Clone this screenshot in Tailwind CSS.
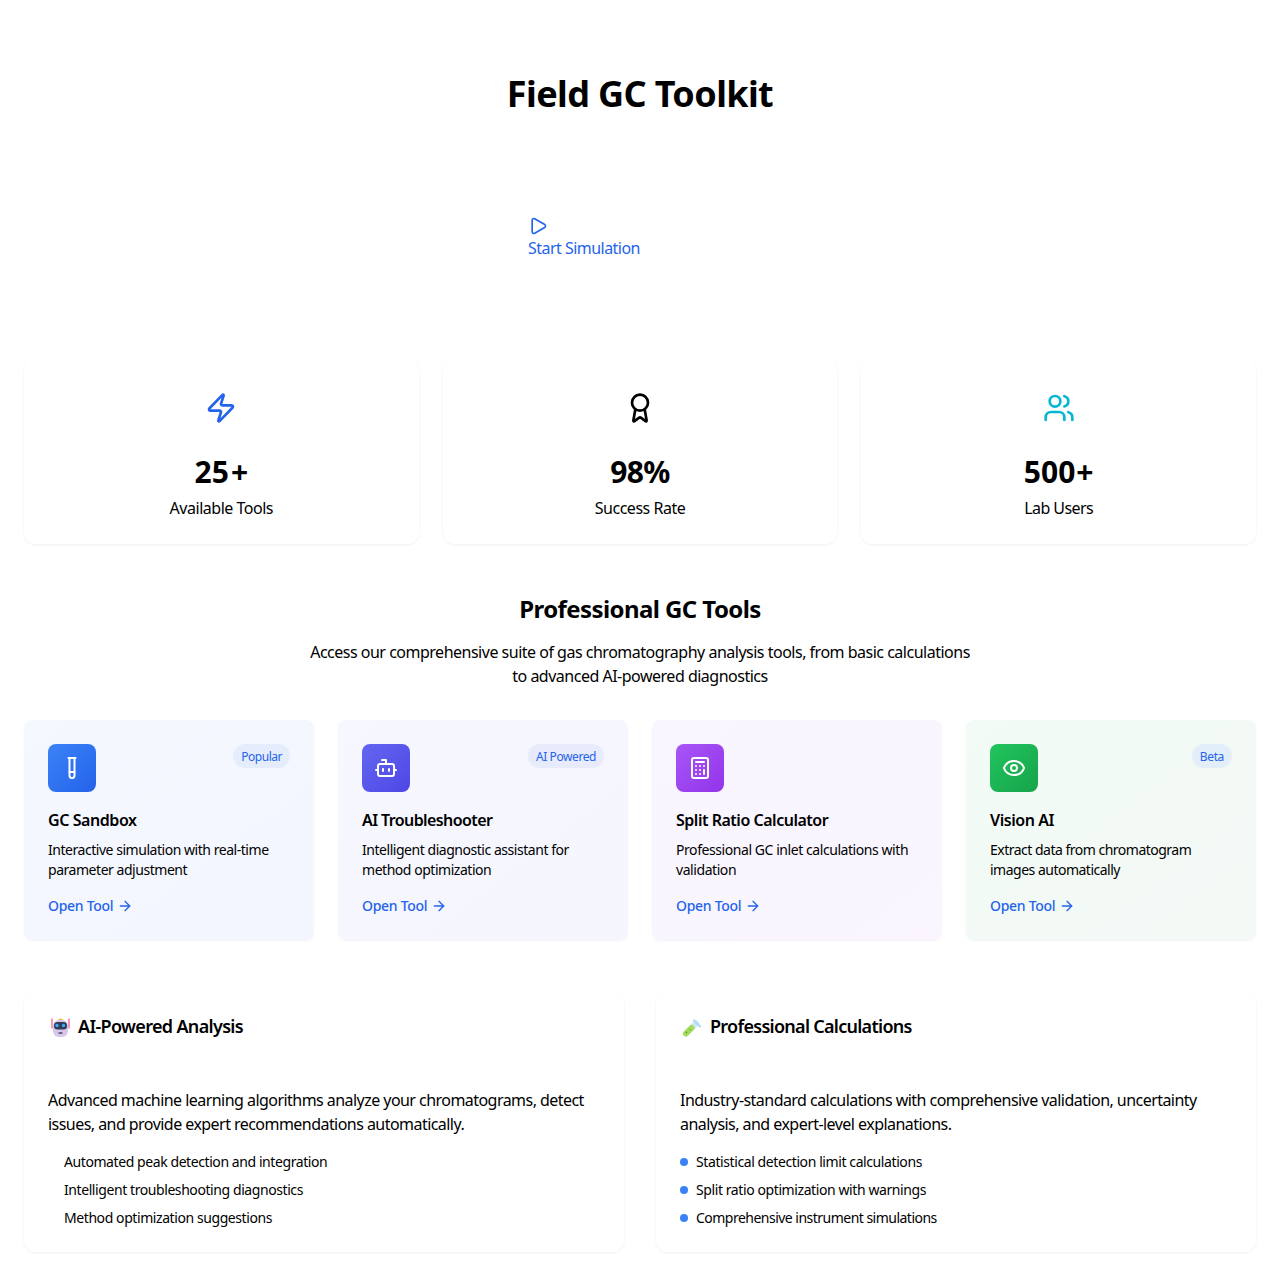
<!DOCTYPE html>
<html lang="en">
  <head>
    <meta charset="UTF-8" />
    <title>Field GC Toolkit</title>
    <script src="https://cdn.jsdelivr.net/npm/@tailwindcss/browser@4"></script>
  </head>
  <body class="bg-white text-black font-['Noto_Sans',sans-serif]">
    <main class="h-[1276px] overflow-hidden px-6">
      <!-- Hero -->
      <section class="h-[358px] pt-[70px]">
        <h1 class="text-center text-4xl leading-[48px] font-bold tracking-[-0.017em]">Field GC Toolkit</h1>
        <div class="w-[224px] mx-auto mt-[98px]">
          <svg class="w-5 h-5 text-[#2563eb]" viewBox="0 0 24 24" fill="none" stroke="currentColor" stroke-width="2" stroke-linecap="round" stroke-linejoin="round"><path d="M5 5a2 2 0 0 1 3.008-1.728l11.997 6.998a2 2 0 0 1 .003 3.458l-12 7A2 2 0 0 1 5 19z" /></svg>
          <span class="block text-base leading-6 text-[#2563eb] tracking-[-0.033em]">Start Simulation</span>
        </div>
      </section>

      <!-- Stats -->
      <section class="grid grid-cols-3 gap-6 h-[186px]">
        <div class="rounded-xl bg-white shadow-[0_1px_3px_rgba(0,0,0,0.06)] pt-[34px] text-center">
          <svg class="w-8 h-8 mx-auto text-[#2563eb]" viewBox="0 0 24 24" fill="none" stroke="currentColor" stroke-width="2" stroke-linecap="round" stroke-linejoin="round"><path d="M4 14a1 1 0 0 1-.78-1.63l9.9-10.2a.5.5 0 0 1 .86.46l-1.92 6.02A1 1 0 0 0 13 10h7a1 1 0 0 1 .78 1.63l-9.9 10.2a.5.5 0 0 1-.86-.46l1.92-6.02A1 1 0 0 0 11 14z" /></svg>
          <p class="mt-[30px] text-3xl leading-9 font-bold">25<span class="ml-0.5">+</span></p>
          <p class="mt-1.5 text-base leading-6 tracking-[-0.03em]">Available Tools</p>
        </div>
        <div class="rounded-xl bg-white shadow-[0_1px_3px_rgba(0,0,0,0.06)] pt-[34px] text-center">
          <svg class="w-8 h-8 mx-auto text-black" viewBox="0 0 24 24" fill="none" stroke="currentColor" stroke-width="2" stroke-linecap="round" stroke-linejoin="round"><path d="m15.477 12.89 1.515 8.526a.5.5 0 0 1-.81.47l-3.58-2.687a1 1 0 0 0-1.197 0l-3.586 2.686a.5.5 0 0 1-.81-.469l1.514-8.526" /><circle cx="12" cy="8" r="6" /></svg>
          <p class="mt-[30px] text-3xl leading-9 font-bold tracking-[-0.02em]">98%</p>
          <p class="mt-1.5 text-base leading-6 tracking-[-0.03em]">Success Rate</p>
        </div>
        <div class="rounded-xl bg-white shadow-[0_1px_3px_rgba(0,0,0,0.06)] pt-[34px] text-center">
          <svg class="w-8 h-8 mx-auto text-[#06b6d4]" viewBox="0 0 24 24" fill="none" stroke="currentColor" stroke-width="2" stroke-linecap="round" stroke-linejoin="round"><path d="M16 21v-2a4 4 0 0 0-4-4H6a4 4 0 0 0-4 4v2" /><circle cx="9" cy="7" r="4" /><path d="M22 21v-2a4 4 0 0 0-3-3.87" /><path d="M16 3.13a4 4 0 0 1 0 7.75" /></svg>
          <p class="mt-[30px] text-3xl leading-9 font-bold">500<span class="ml-px">+</span></p>
          <p class="mt-1.5 text-base leading-6 tracking-[-0.035em]">Lab Users</p>
        </div>
      </section>

      <!-- Tools heading -->
      <section class="mt-[47px] text-center">
        <h2 class="text-2xl leading-9 font-bold tracking-[-0.024em]">Professional GC Tools</h2>
        <p class="mt-[13px] mx-auto max-w-2xl text-base leading-6 tracking-[-0.031em]">Access our comprehensive suite of gas chromatography analysis tools, from basic calculations to advanced AI-powered diagnostics</p>
      </section>

      <!-- Tool cards -->
      <section class="mt-[32px] grid grid-cols-4 gap-6">
        <article class="h-[220px] rounded-lg p-6 bg-gradient-to-br from-[#f5f8ff] to-[#f3f6fe] shadow-[0_1px_2px_rgba(0,0,0,0.05)]">
          <div class="flex items-start justify-between">
            <div class="w-12 h-12 rounded-lg flex items-center justify-center bg-gradient-to-br from-[#3b82f6] to-[#2563eb]">
              <svg class="w-6 h-6 text-white" viewBox="0 0 24 24" fill="none" stroke="currentColor" stroke-width="2" stroke-linecap="round" stroke-linejoin="round"><path d="M14.5 2v17.5c0 1.4-1.1 2.5-2.5 2.5c-1.4 0-2.5-1.1-2.5-2.5V2" /><path d="M8.5 2h7" /><path d="M14.5 16h-5" /></svg>
            </div>
            <span class="h-6 px-2 rounded-full bg-[#e5edfd] text-xs leading-[26px] text-[#2563eb] tracking-[-0.04em]">Popular</span>
          </div>
          <h3 class="mt-4 text-base leading-6 font-semibold tracking-[-0.027em]">GC Sandbox</h3>
          <p class="mt-2 text-sm leading-5 tracking-[-0.033em]">Interactive simulation with real-time parameter adjustment</p>
          <a class="mt-4 flex items-center gap-1 text-sm leading-5 font-medium text-[#2563eb] tracking-[-0.02em]">Open Tool <svg class="w-4 h-4" viewBox="0 0 24 24" fill="none" stroke="currentColor" stroke-width="2" stroke-linecap="round" stroke-linejoin="round"><path d="M5 12h14" /><path d="m12 5 7 7-7 7" /></svg></a>
        </article>
        <article class="h-[220px] rounded-lg p-6 bg-gradient-to-br from-[#f6f7ff] to-[#f5f5fe] shadow-[0_1px_2px_rgba(0,0,0,0.05)]">
          <div class="flex items-start justify-between">
            <div class="w-12 h-12 rounded-lg flex items-center justify-center bg-gradient-to-br from-[#6366f1] to-[#4f46e5]">
              <svg class="w-6 h-6 text-white" viewBox="0 0 24 24" fill="none" stroke="currentColor" stroke-width="2" stroke-linecap="round" stroke-linejoin="round"><path d="M12 8V4H8" /><rect width="16" height="12" x="4" y="8" rx="2" /><path d="M2 14h2" /><path d="M20 14h2" /><path d="M15 13v2" /><path d="M9 13v2" /></svg>
            </div>
            <span class="h-6 px-2 rounded-full bg-[#e7ebfc] text-xs leading-[26px] text-[#2563eb] tracking-[-0.035em]">AI Powered</span>
          </div>
          <h3 class="mt-4 text-base leading-6 font-semibold tracking-[-0.037em]">AI Troubleshooter</h3>
          <p class="mt-2 text-sm leading-5 tracking-[-0.033em]">Intelligent diagnostic assistant for method optimization</p>
          <a class="mt-4 flex items-center gap-1 text-sm leading-5 font-medium text-[#2563eb] tracking-[-0.02em]">Open Tool <svg class="w-4 h-4" viewBox="0 0 24 24" fill="none" stroke="currentColor" stroke-width="2" stroke-linecap="round" stroke-linejoin="round"><path d="M5 12h14" /><path d="m12 5 7 7-7 7" /></svg></a>
        </article>
        <article class="h-[220px] rounded-lg p-6 bg-gradient-to-br from-[#f9f6ff] to-[#faf5fe] shadow-[0_1px_2px_rgba(0,0,0,0.05)]">
          <div class="flex items-start justify-between">
            <div class="w-12 h-12 rounded-lg flex items-center justify-center bg-gradient-to-br from-[#a855f7] to-[#9333ea]">
              <svg class="w-6 h-6 text-white" viewBox="0 0 24 24" fill="none" stroke="currentColor" stroke-width="2" stroke-linecap="round" stroke-linejoin="round"><rect width="16" height="20" x="4" y="2" rx="2" /><line x1="8" x2="16" y1="6" y2="6" /><line x1="16" x2="16" y1="14" y2="18" /><path d="M16 10h.01" /><path d="M12 10h.01" /><path d="M8 10h.01" /><path d="M12 14h.01" /><path d="M8 14h.01" /><path d="M12 18h.01" /><path d="M8 18h.01" /></svg>
            </div>
          </div>
          <h3 class="mt-4 text-base leading-6 font-semibold tracking-[-0.03em]">Split Ratio Calculator</h3>
          <p class="mt-2 text-sm leading-5 tracking-[-0.031em]">Professional GC inlet calculations with validation</p>
          <a class="mt-4 flex items-center gap-1 text-sm leading-5 font-medium text-[#2563eb] tracking-[-0.02em]">Open Tool <svg class="w-4 h-4" viewBox="0 0 24 24" fill="none" stroke="currentColor" stroke-width="2" stroke-linecap="round" stroke-linejoin="round"><path d="M5 12h14" /><path d="m12 5 7 7-7 7" /></svg></a>
        </article>
        <article class="h-[220px] rounded-lg p-6 bg-gradient-to-br from-[#f2fbf6] to-[#f4f9f6] shadow-[0_1px_2px_rgba(0,0,0,0.05)]">
          <div class="flex items-start justify-between">
            <div class="w-12 h-12 rounded-lg flex items-center justify-center bg-gradient-to-br from-[#22c55e] to-[#16a34a]">
              <svg class="w-6 h-6 text-white" viewBox="0 0 24 24" fill="none" stroke="currentColor" stroke-width="2" stroke-linecap="round" stroke-linejoin="round"><path d="M2.062 12.348a1 1 0 0 1 0-.696 10.75 10.75 0 0 1 19.876 0 1 1 0 0 1 0 .696 10.75 10.75 0 0 1-19.876 0" /><circle cx="12" cy="12" r="3" /></svg>
            </div>
            <span class="h-6 px-2 rounded-full bg-[#e2eefa] text-xs leading-[26px] text-[#2563eb] tracking-[-0.03em]">Beta</span>
          </div>
          <h3 class="mt-4 text-base leading-6 font-semibold tracking-[-0.027em]">Vision AI</h3>
          <p class="mt-2 text-sm leading-5 tracking-[-0.036em]">Extract data from chromatogram images automatically</p>
          <a class="mt-4 flex items-center gap-1 text-sm leading-5 font-medium text-[#2563eb] tracking-[-0.02em]">Open Tool <svg class="w-4 h-4" viewBox="0 0 24 24" fill="none" stroke="currentColor" stroke-width="2" stroke-linecap="round" stroke-linejoin="round"><path d="M5 12h14" /><path d="m12 5 7 7-7 7" /></svg></a>
        </article>
      </section>

      <!-- Feature panels -->
      <section class="mt-[52px] grid grid-cols-2 gap-8">
        <article class="h-[260px] rounded-xl bg-white shadow-[0_1px_3px_rgba(0,0,0,0.06)] px-6 pt-6">
          <h3 class="flex items-center gap-2 text-lg font-semibold tracking-[-0.037em]">
            <svg class="w-[22px] h-[22px]" viewBox="0 0 22 22"><path d="M4 2.5v10M21 2.5v10" stroke="#f06fa4" stroke-width="1.4" /><path d="M9.5 4q3-3 6 0z" fill="#f5b93a" /><rect x="5" y="4" width="15" height="17" rx="6" fill="#d6c8e8" /><rect x="6" y="6" width="13" height="7.5" rx="3.5" fill="#343a58" /><circle cx="9" cy="9.5" r="1.7" fill="#35b2ee" /><circle cx="15.5" cy="9.5" r="1.7" fill="#35b2ee" /><rect x="10.5" y="16.3" width="4" height="1.5" rx="0.5" fill="#4a4560" /></svg>
            <span class="leading-5 pb-0.5">AI-Powered Analysis</span>
          </h3>
          <p class="mt-[50px] text-base leading-6 tracking-[-0.034em]">Advanced machine learning algorithms analyze your chromatograms, detect issues, and provide expert recommendations automatically.</p>
          <ul class="mt-[16px] text-sm leading-5 space-y-2 pl-4 tracking-[-0.03em]">
            <li>Automated peak detection and integration</li>
            <li>Intelligent troubleshooting diagnostics</li>
            <li>Method optimization suggestions</li>
          </ul>
        </article>
        <article class="h-[260px] rounded-xl bg-white shadow-[0_1px_3px_rgba(0,0,0,0.06)] px-6 pt-6">
          <h3 class="flex items-center gap-2 text-lg font-semibold tracking-[-0.04em]">
            <svg class="w-[22px] h-[22px]" viewBox="0 0 22 22"><path d="M6 17.5L16 7.5" stroke="#cfe6f7" stroke-width="6" stroke-linecap="round" /><path d="M6 17.5L11.5 12" stroke="#a6dc5e" stroke-width="6" stroke-linecap="round" /><path d="M14 4.5l6 6" stroke="#b4d9f3" stroke-width="2.4" stroke-linecap="round" /><circle cx="6.5" cy="16.5" r="0.9" fill="#5aa83a" /><circle cx="10" cy="13.5" r="0.8" fill="#5aa83a" /></svg>
            <span class="leading-5 pb-0.5">Professional Calculations</span>
          </h3>
          <p class="mt-[50px] text-base leading-6 tracking-[-0.034em]">Industry-standard calculations with comprehensive validation, uncertainty analysis, and expert-level explanations.</p>
          <ul class="mt-[16px] text-sm leading-5 space-y-2 tracking-[-0.029em]">
            <li class="flex items-center gap-2"><span class="w-2 h-2 rounded-full bg-[#3b82f6]"></span>Statistical detection limit calculations</li>
            <li class="flex items-center gap-2"><span class="w-2 h-2 rounded-full bg-[#3b82f6]"></span>Split ratio optimization with warnings</li>
            <li class="flex items-center gap-2 tracking-[-0.037em]"><span class="w-2 h-2 rounded-full bg-[#3b82f6]"></span>Comprehensive instrument simulations</li>
          </ul>
        </article>
      </section>
    </main>
  </body>
</html>
